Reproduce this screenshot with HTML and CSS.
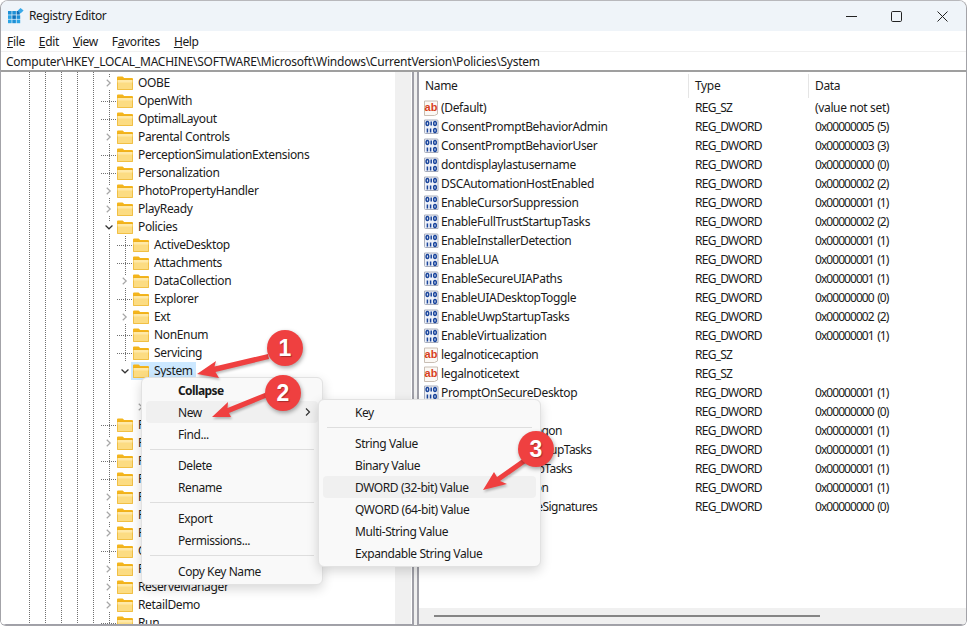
FILE: index.html
```html
<!DOCTYPE html>
<html lang="en">
<head>
<meta charset="utf-8">
<title>Registry Editor</title>
<link rel="stylesheet" href="styles.css">
</head>
<body>
<svg class="defs" width="0" height="0" aria-hidden="true">
  <symbol id="folder" viewBox="0 0 16 16">
    <path d="M0 2.5q0-1 1-1h4.6l1.6 1.6H15q1 0 1 1V6H0z" fill="#f4b51c"/>
    <rect x="0" y="4.4" width="16" height="10.6" rx="1" fill="#e9ad1d"/>
    <rect x="0.6" y="5" width="14.8" height="9.4" fill="#fcdc82"/>
    <path d="M0.6 5h14.8v2.5H0.6z" fill="#ffe9a8"/>
  </symbol>
  <symbol id="right" viewBox="0 0 16 16"><path d="M5 3.6 9.6 8 5 12.4" fill="none" stroke="#a6a6a6" stroke-width="1.6"/></symbol>
  <symbol id="down" viewBox="0 0 16 16"><path d="M3.4 6 8 10.400 12.600 6" fill="none" stroke="#333" stroke-width="1.6"/></symbol>
  <symbol id="dw" viewBox="0 0 16 16">
    <g transform="translate(-1 0)">
      <path d="M1.500 1h12.500a1 1 0 0 1 1 1v12.500H2.500a1 1 0 0 1-1-1z" fill="#eef1f8" stroke="#a9aebc"/>
      <g fill="none" stroke="#1a459c" stroke-width="1.500">
        <ellipse cx="4.400" cy="4.500" rx="1.300" ry="2"/><path d="M8.200 2.500v4"/><ellipse cx="12" cy="4.500" rx="1.300" ry="2"/>
        <path d="M4.400 9.500v4"/><path d="M7.600 9.500v4"/><ellipse cx="12" cy="11.500" rx="1.300" ry="2"/>
      </g>
    </g>
  </symbol>
  <symbol id="ab" viewBox="0 0 16 16">
    <g transform="translate(-1 0)">
      <path d="M1.500 1h13v13l-3 1.500h-10z" fill="#fbf8f4" stroke="#c9beb4"/>
      <text x="8" y="10.500" text-anchor="middle" class="abtext">ab</text>
    </g>
  </symbol>
</svg>

<div class="window">
  <header class="titlebar">
    <svg class="appicon" width="16" height="16" viewBox="0 0 16 16">
      <g fill="#1e90d6">
        <rect x="0" y="3" width="3.600" height="3.600"/><rect x="4.300" y="3" width="3.600" height="3.600"/><rect x="8.600" y="3" width="3.200" height="3.600" fill="#0e6fb8"/>
        <rect x="0" y="7.300" width="3.600" height="3.600" fill="#2aa3e4"/><rect x="4.300" y="7.300" width="3.600" height="3.600" fill="#0e6fb8"/><rect x="8.600" y="7.300" width="3.600" height="3.600"/>
        <rect x="0" y="11.600" width="3.600" height="3.600" fill="#2aa3e4"/><rect x="4.300" y="11.600" width="3.600" height="3.600"/><rect x="8.600" y="11.600" width="3.600" height="3.600" fill="#2aa3e4"/>
      </g>
      <path d="M12.500 0 15.600 2.600 12.500 5.600 9.600 2.800z" fill="#39a9e8"/>
    </svg>
    <span class="apptitle">Registry Editor</span>
    <div class="controls">
      <svg class="ctl-min" width="11" height="11" viewBox="0 0 11 11"><path d="M0 5.500h11" stroke="#222"/></svg>
      <svg class="ctl-max" width="11" height="11" viewBox="0 0 11 11"><rect x=".5" y=".5" width="10" height="10" rx="1.200" fill="none" stroke="#222"/></svg>
      <svg class="ctl-close" width="11" height="11" viewBox="0 0 11 11"><path d="M.5.5l10 10M10.500.5l-10 10" stroke="#222"/></svg>
    </div>
  </header>
  <nav class="menubar">
    <span class="mi mi-file"><u>F</u>ile</span>
    <span class="mi mi-edit"><u>E</u>dit</span>
    <span class="mi mi-view"><u>V</u>iew</span>
    <span class="mi mi-fav">F<u>a</u>vorites</span>
    <span class="mi mi-help"><u>H</u>elp</span>
  </nav>
  <div class="address">Computer\HKEY_LOCAL_MACHINE\SOFTWARE\Microsoft\Windows\CurrentVersion\Policies\System</div>

  <main class="panes">
    <section class="treepane">
      <div class="tree">
        <div class="row"><span class="tw branch"><svg class="ic"><use href="#right"/></svg></span><svg class="ic"><use href="#folder"/></svg><span class="lb">OOBE</span></div>
        <div class="row"><span class="tw leaf"></span><svg class="ic"><use href="#folder"/></svg><span class="lb">OpenWith</span></div>
        <div class="row"><span class="tw leaf"></span><svg class="ic"><use href="#folder"/></svg><span class="lb">OptimalLayout</span></div>
        <div class="row"><span class="tw branch"><svg class="ic"><use href="#right"/></svg></span><svg class="ic"><use href="#folder"/></svg><span class="lb">Parental Controls</span></div>
        <div class="row"><span class="tw leaf"></span><svg class="ic"><use href="#folder"/></svg><span class="lb">PerceptionSimulationExtensions</span></div>
        <div class="row"><span class="tw leaf"></span><svg class="ic"><use href="#folder"/></svg><span class="lb">Personalization</span></div>
        <div class="row"><span class="tw branch"><svg class="ic"><use href="#right"/></svg></span><svg class="ic"><use href="#folder"/></svg><span class="lb">PhotoPropertyHandler</span></div>
        <div class="row"><span class="tw branch"><svg class="ic"><use href="#right"/></svg></span><svg class="ic"><use href="#folder"/></svg><span class="lb">PlayReady</span></div>
        <div class="row"><span class="tw branch"><svg class="ic"><use href="#down"/></svg></span><svg class="ic"><use href="#folder"/></svg><span class="lb">Policies</span></div>

        <div class="row d2"><span class="tw2"></span><span class="tw leaf"></span><svg class="ic"><use href="#folder"/></svg><span class="lb">ActiveDesktop</span></div>
        <div class="row d2"><span class="tw2"></span><span class="tw leaf"></span><svg class="ic"><use href="#folder"/></svg><span class="lb">Attachments</span></div>
        <div class="row d2"><span class="tw2"></span><span class="tw branch"><svg class="ic"><use href="#right"/></svg></span><svg class="ic"><use href="#folder"/></svg><span class="lb">DataCollection</span></div>
        <div class="row d2"><span class="tw2"></span><span class="tw leaf"></span><svg class="ic"><use href="#folder"/></svg><span class="lb">Explorer</span></div>
        <div class="row d2"><span class="tw2"></span><span class="tw branch"><svg class="ic"><use href="#right"/></svg></span><svg class="ic"><use href="#folder"/></svg><span class="lb">Ext</span></div>
        <div class="row d2"><span class="tw2"></span><span class="tw leaf"></span><svg class="ic"><use href="#folder"/></svg><span class="lb">NonEnum</span></div>
        <div class="row d2"><span class="tw2"></span><span class="tw leaf"></span><svg class="ic"><use href="#folder"/></svg><span class="lb">Servicing</span></div>
        <div class="row d2"><span class="tw2"></span><span class="tw plain"><svg class="ic"><use href="#down"/></svg></span><span class="sel"><svg class="ic"><use href="#folder"/></svg><span class="lb">System</span></span></div>

        <div class="row d3"><span class="tw2"></span><span class="tw3"></span><span class="tw plain"></span><svg class="ic"><use href="#folder"/></svg><span class="lb">Audit</span></div>
        <div class="row d3"><span class="tw2"></span><span class="tw3"></span><span class="tw plain"><svg class="ic"><use href="#right"/></svg></span><svg class="ic"><use href="#folder"/></svg><span class="lb">UIPI</span></div>

        <div class="row"><span class="tw leaf"></span><svg class="ic"><use href="#folder"/></svg><span class="lb">PowerEfficiencyDiagnostics</span></div>
        <div class="row"><span class="tw branch"><svg class="ic"><use href="#right"/></svg></span><svg class="ic"><use href="#folder"/></svg><span class="lb">PrecisionTouchPad</span></div>
        <div class="row"><span class="tw leaf"></span><svg class="ic"><use href="#folder"/></svg><span class="lb">PreviewHandlers</span></div>
        <div class="row"><span class="tw leaf"></span><svg class="ic"><use href="#folder"/></svg><span class="lb">Privacy</span></div>
        <div class="row"><span class="tw branch"><svg class="ic"><use href="#right"/></svg></span><svg class="ic"><use href="#folder"/></svg><span class="lb">PropertySystem</span></div>
        <div class="row"><span class="tw branch"><svg class="ic"><use href="#right"/></svg></span><svg class="ic"><use href="#folder"/></svg><span class="lb">Proximity</span></div>
        <div class="row"><span class="tw branch"><svg class="ic"><use href="#right"/></svg></span><svg class="ic"><use href="#folder"/></svg><span class="lb">PushNotifications</span></div>
        <div class="row"><span class="tw leaf"></span><svg class="ic"><use href="#folder"/></svg><span class="lb">QualityCompat</span></div>
        <div class="row"><span class="tw branch"><svg class="ic"><use href="#right"/></svg></span><svg class="ic"><use href="#folder"/></svg><span class="lb">Reliability</span></div>
        <div class="row"><span class="tw branch"><svg class="ic"><use href="#right"/></svg></span><svg class="ic"><use href="#folder"/></svg><span class="lb">ReserveManager</span></div>
        <div class="row"><span class="tw branch"><svg class="ic"><use href="#right"/></svg></span><svg class="ic"><use href="#folder"/></svg><span class="lb">RetailDemo</span></div>
        <div class="row"><span class="tw leaf"></span><svg class="ic"><use href="#folder"/></svg><span class="lb">Run</span></div>
      </div>
      <div class="vscroll"></div>
    </section>

    <section class="listpane">
      <div class="list">
        <div class="lhead"><span class="c1">Name</span><span class="c2">Type</span><span class="c3">Data</span></div>
        <div class="lrow"><span class="c1"><svg class="ic"><use href="#ab"/></svg>(Default)</span><span class="c2">REG_SZ</span><span class="c3">(value not set)</span></div>
        <div class="lrow"><span class="c1"><svg class="ic"><use href="#dw"/></svg>ConsentPromptBehaviorAdmin</span><span class="c2">REG_DWORD</span><span class="c3">0x00000005 (5)</span></div>
        <div class="lrow"><span class="c1"><svg class="ic"><use href="#dw"/></svg>ConsentPromptBehaviorUser</span><span class="c2">REG_DWORD</span><span class="c3">0x00000003 (3)</span></div>
        <div class="lrow"><span class="c1"><svg class="ic"><use href="#dw"/></svg>dontdisplaylastusername</span><span class="c2">REG_DWORD</span><span class="c3">0x00000000 (0)</span></div>
        <div class="lrow"><span class="c1"><svg class="ic"><use href="#dw"/></svg>DSCAutomationHostEnabled</span><span class="c2">REG_DWORD</span><span class="c3">0x00000002 (2)</span></div>
        <div class="lrow"><span class="c1"><svg class="ic"><use href="#dw"/></svg>EnableCursorSuppression</span><span class="c2">REG_DWORD</span><span class="c3">0x00000001 (1)</span></div>
        <div class="lrow"><span class="c1"><svg class="ic"><use href="#dw"/></svg>EnableFullTrustStartupTasks</span><span class="c2">REG_DWORD</span><span class="c3">0x00000002 (2)</span></div>
        <div class="lrow"><span class="c1"><svg class="ic"><use href="#dw"/></svg>EnableInstallerDetection</span><span class="c2">REG_DWORD</span><span class="c3">0x00000001 (1)</span></div>
        <div class="lrow"><span class="c1"><svg class="ic"><use href="#dw"/></svg>EnableLUA</span><span class="c2">REG_DWORD</span><span class="c3">0x00000001 (1)</span></div>
        <div class="lrow"><span class="c1"><svg class="ic"><use href="#dw"/></svg>EnableSecureUIAPaths</span><span class="c2">REG_DWORD</span><span class="c3">0x00000001 (1)</span></div>
        <div class="lrow"><span class="c1"><svg class="ic"><use href="#dw"/></svg>EnableUIADesktopToggle</span><span class="c2">REG_DWORD</span><span class="c3">0x00000000 (0)</span></div>
        <div class="lrow"><span class="c1"><svg class="ic"><use href="#dw"/></svg>EnableUwpStartupTasks</span><span class="c2">REG_DWORD</span><span class="c3">0x00000002 (2)</span></div>
        <div class="lrow"><span class="c1"><svg class="ic"><use href="#dw"/></svg>EnableVirtualization</span><span class="c2">REG_DWORD</span><span class="c3">0x00000001 (1)</span></div>
        <div class="lrow"><span class="c1"><svg class="ic"><use href="#ab"/></svg>legalnoticecaption</span><span class="c2">REG_SZ</span><span class="c3"></span></div>
        <div class="lrow"><span class="c1"><svg class="ic"><use href="#ab"/></svg>legalnoticetext</span><span class="c2">REG_SZ</span><span class="c3"></span></div>
        <div class="lrow"><span class="c1"><svg class="ic"><use href="#dw"/></svg>PromptOnSecureDesktop</span><span class="c2">REG_DWORD</span><span class="c3">0x00000001 (1)</span></div>
        <div class="lrow"><span class="c1"><svg class="ic"><use href="#dw"/></svg>scforceoption</span><span class="c2">REG_DWORD</span><span class="c3">0x00000000 (0)</span></div>
        <div class="lrow"><span class="c1 tight"><svg class="ic"><use href="#dw"/></svg>shutdownwithoutlogon</span><span class="c2">REG_DWORD</span><span class="c3">0x00000001 (1)</span></div>
        <div class="lrow"><span class="c1 tight"><svg class="ic"><use href="#dw"/></svg>SupportFullTrustStartupTasks</span><span class="c2">REG_DWORD</span><span class="c3">0x00000001 (1)</span></div>
        <div class="lrow"><span class="c1 tight"><svg class="ic"><use href="#dw"/></svg>SupportUwpStartupTasks</span><span class="c2">REG_DWORD</span><span class="c3">0x00000001 (1)</span></div>
        <div class="lrow"><span class="c1 tight"><svg class="ic"><use href="#dw"/></svg>undockwithoutlogon</span><span class="c2">REG_DWORD</span><span class="c3">0x00000001 (1)</span></div>
        <div class="lrow"><span class="c1 tight"><svg class="ic"><use href="#dw"/></svg>ValidateAdminCodeSignatures</span><span class="c2">REG_DWORD</span><span class="c3">0x00000000 (0)</span></div>
      </div>
      <div class="hscroll"><span class="hthumb"></span></div>
    </section>
  </main>

  <div class="menu menu-main">
    <div class="item bold">Collapse</div>
    <div class="item hot">New<svg class="sub" width="8" height="10" viewBox="0 0 8 10"><path d="M2 1.500 5.500 5 2 8.500" fill="none" stroke="#333" stroke-width="1.200"/></svg></div>
    <div class="item">Find...</div>
    <div class="sep"></div>
    <div class="item">Delete</div>
    <div class="item">Rename</div>
    <div class="sep"></div>
    <div class="item">Export</div>
    <div class="item">Permissions...</div>
    <div class="sep"></div>
    <div class="item">Copy Key Name</div>
  </div>
  <div class="menu menu-sub">
    <div class="item">Key</div>
    <div class="sep"></div>
    <div class="item">String Value</div>
    <div class="item">Binary Value</div>
    <div class="item hot">DWORD (32-bit) Value</div>
    <div class="item">QWORD (64-bit) Value</div>
    <div class="item">Multi-String Value</div>
    <div class="item">Expandable String Value</div>
  </div>

  <svg class="arrows" width="967" height="627" viewBox="0 0 967 627" aria-hidden="true">
    <g fill="#ef4040">
      <path d="M197 374 216 361 214.500 366.500 268 354 269 359 215.500 372 219 378z"/>
      <path d="M212 417 228 402 227.500 408 266 392.500 268 397 229 413 231 417z"/>
      <path d="M483 490 494 472 497 477 524 458 527 462 500 481 507 484z"/>
    </g>
  </svg>
  <div class="badge b1">1</div>
  <div class="badge b2">2</div>
  <div class="badge b3">3</div>
</div>
</body>
</html>
```

FILE: styles.css
```css
* { box-sizing: border-box; }
html, body { margin: 0; padding: 0; height: 100%; background: #fff; overflow: hidden; }
body { font: 12px/18px "Noto Sans", "Liberation Sans", sans-serif; color: #1a1a1a; letter-spacing: -0.35px; }
.defs { display: block; height: 0; }
.abtext { font: 700 11px "Liberation Sans", sans-serif; fill: #d8401c; letter-spacing: 0; }

.window {
  position: relative;
  width: 967px; height: 626px;
  border: 1px solid #a3a3a8; border-top-color: #b8b8bc;
  border-radius: 8px 8px 6px 6px;
  overflow: hidden;
  display: flex; flex-direction: column;
  background: #fff;
}

.titlebar { height: 30px; flex: none; background: #eff4f9; display: flex; align-items: center; padding-left: 7px; }
.appicon { flex: none; }
.apptitle { margin-left: 5px; }
.controls { margin-left: auto; display: flex; align-items: center; }
.controls svg { display: block; }
.ctl-min { margin-right: 34px; }
.ctl-max { margin-right: 35px; }
.ctl-close { margin-right: 18px; }

.menubar { height: 20px; flex: none; display: flex; align-items: center; background: #fff; padding: 2px 0 0 6px; }
.mi-edit, .mi-view, .mi-fav, .mi-help { margin-left: 14px; }

.address { height: 21px; flex: none; padding: 1px 0 0 5px; line-height: 18px; background: #fff; border-top: 1px solid #f0f0f0; border-bottom: 2px solid #9f9f9f; white-space: nowrap; overflow: hidden; letter-spacing: -0.24px; }

.panes { flex: 1; min-height: 0; display: flex; background: #f0f0f0; }

.treepane { width: 413px; flex: none; display: flex; background: #fff; border-right: 2px solid #a0a0a8; border-bottom: 1px solid #a0a0a8; overflow: hidden; }
.tree {
  width: 394px; flex: none; padding-top: 2px; overflow: hidden; background-color: #fff;
  background-image:
    linear-gradient(#707070 50%, transparent 50%), linear-gradient(#707070 50%, transparent 50%),
    linear-gradient(#707070 50%, transparent 50%), linear-gradient(#707070 50%, transparent 50%),
    linear-gradient(#707070 50%, transparent 50%);
  background-size: 1px 2px;
  background-repeat: repeat-y;
  background-position: 28px 0, 44px 0, 60px 0, 76px 0, 92px 0;
}
.vscroll { flex: 1; background: #f0f0f0; border-right: 1px solid #fff; }

.row { height: 18px; display: flex; align-items: center; padding-left: 100px; white-space: nowrap; }
.ic { width: 16px; height: 16px; flex: none; display: block; }
.lb { margin-left: 5px; }
.tw, .tw2, .tw3 { width: 16px; height: 18px; flex: none; display: flex; align-items: center; justify-content: center; background-repeat: repeat-y; }
.tw, .tw2 {
  background-image: linear-gradient(#707070 50%, transparent 50%);
  background-size: 1px 2px;
  background-position: 8px 0;
}
.tw.plain { background-image: none; }
.tw3 { background: none; }
.tw.leaf {
  background-image: linear-gradient(#707070 50%, transparent 50%), linear-gradient(90deg, #707070 50%, transparent 50%);
  background-size: 1px 2px, 2px 1px;
  background-position: 8px 0, 8px 9px;
  background-repeat: repeat-y, repeat-x;
}
.tw.branch .ic, .tw.plain .ic { background: #fff; height: 12px; width: 12px; }
.sel { display: flex; align-items: center; height: 18px; background: #cce8ff; padding: 0 3px 0 2px; margin-left: -2px; }

.listpane { flex: 1; min-width: 0; margin-left: 3px; display: flex; flex-direction: column; border-left: 2px solid #a0a0a8; border-bottom: 1px solid #a0a0a8; background: #fff; overflow: hidden; }
.list { flex: 1; min-height: 0; padding-top: 2px; }
.lhead { height: 24px; display: flex; align-items: center; }
.lhead .c1 { padding-left: 6px; border-right: 1px solid #e5e5e5; height: 24px; line-height: 24px; }
.lhead .c2 { border-right: 1px solid #e5e5e5; height: 24px; line-height: 24px; }
.lrow { height: 19px; display: flex; align-items: center; white-space: nowrap; }
.c1 { width: 270px; flex: none; display: flex; align-items: center; padding-left: 5px; gap: 1px; overflow: hidden; }
.c1.tight { letter-spacing: -0.55px; }
.c2 { width: 120px; flex: none; padding-left: 6px; }
.lrow .c2 { letter-spacing: -0.75px; }
.c3 { flex: 1; padding-left: 6px; }
.lrow .c3 { letter-spacing: -0.95px; word-spacing: 1.4px; }
.lrow:nth-child(2) .c3 { letter-spacing: -0.35px; word-spacing: 0; }
.hscroll { height: 16px; flex: none; background: #f0f0f0; display: flex; align-items: center; padding-left: 15px; }
.hthumb { width: 386px; height: 2px; background: #858585; }

.menu {
  position: absolute; z-index: 2;
  background: #f9f9f9;
  border: 1px solid #e2e2e2;
  border-radius: 6px;
  padding: 1px 4px 2px;
  box-shadow: 0 4px 12px rgba(0,0,0,.16);
  letter-spacing: -0.42px;
}
.menu-main { left: 140px; top: 376px; width: 182px; }
.menu-sub { left: 317px; top: 398px; width: 223px; }
.item { height: 22px; line-height: 20px; padding: 2px 0 0 32px; border-radius: 4px; display: flex; align-items: center; justify-content: space-between; }
.bold { font-weight: 700; letter-spacing: -0.6px; }
.hot { background: #f0f0f0; }
.sub { margin: -2px 6px 0 0; }
.sep { height: 1px; margin: 4px 4px 4px; background: #dedede; }

.arrows { position: absolute; left: -1px; top: -1px; z-index: 3; filter: drop-shadow(1px 2px 1px rgba(0,0,0,.25)); }
.badge {
  position: absolute; z-index: 4;
  width: 36px; height: 36px; border-radius: 50%;
  background: #ef4040; color: #fff;
  font: 700 23px/36px "Liberation Sans", sans-serif; letter-spacing: 0; text-align: center;
  text-shadow: 1px 1px 1px rgba(0,0,0,.3);
  box-shadow: 1px 2px 4px rgba(0,0,0,.35);
}
.b1 { left: 266px; top: 329px; }
.b2 { left: 264px; top: 374px; }
.b3 { left: 517px; top: 430px; }
```
